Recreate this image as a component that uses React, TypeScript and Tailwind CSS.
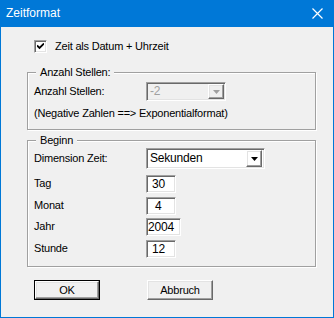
import React from "react";

const font = { fontFamily: '"Liberation Sans", Arial, sans-serif' };

const sunken =
  "border border-t-[#a0a0a0] border-l-[#a0a0a0] border-b-white border-r-white shadow-[inset_1px_1px_0_#696969,inset_-1px_-1px_0_#e3e3e3]";
const raised =
  "border border-t-white border-l-white border-b-[#696969] border-r-[#696969] shadow-[inset_-1px_-1px_0_#a0a0a0,inset_1px_1px_0_#e3e3e3]";

const Arrow = ({ color }: { color: string }) => (
  <svg width="7" height="4" viewBox="0 0 7 4">
    <path d="M0 0h7L3.5 4z" fill={color} />
  </svg>
);

const Group = ({ title, className, children }: { title: string; className: string; children: React.ReactNode }) => (
  <div className={`relative ml-[26px] w-[289px] border border-[#a0a0a0] shadow-[1px_1px_0_#fff,inset_1px_1px_0_#fff] ${className}`}>
    <span className="absolute -top-[8px] left-[8px] bg-[#f0f0f0] px-[4px] leading-[14px]">{title}</span>
    {children}
  </div>
);

const Field = ({ label, value, w, mt, pl }: { label: string; value: string; w: string; mt: string; pl: string }) => (
  <div className={`flex items-center h-[18px] ${mt}`}>
    <span className="w-[112px] -mt-[2px]">{label}</span>
    <div className={`${sunken} ${w} ${pl} h-[18px] bg-white leading-[16px] text-[12px]`}>{value}</div>
  </div>
);

export default function App() {
  return (
    <div className="w-[334px] h-[318px] bg-[#0078d7] px-[1px] pb-[1px] flex flex-col text-[11px] leading-[13px] text-black tracking-[-0.2px]" style={font}>
      <div className="h-[27px] shrink-0 flex items-center justify-between pl-[5px] pr-[10px] text-white text-[12px] tracking-normal">
        <span className="-mt-[1px]">Zeitformat</span>
        <svg width="11" height="11" viewBox="0 0 11 11">
          <path d="M0.5 0.5l10 10M10.5 0.5l-10 10" stroke="#fff" strokeWidth="1.2" />
        </svg>
      </div>
      <div className="flex-1 bg-[#f0f0f0] flex flex-col">
        <div className="mt-[13px] ml-[33px] h-[13px] flex items-center gap-[8px]">
          <div className={`${sunken} w-[13px] h-[13px] bg-white flex items-center justify-center`}>
            <svg width="7" height="7" viewBox="0 0 7 7">
              <path d="M0 2.5l2.5 2.5L7 0.5" stroke="#000" strokeWidth="1.8" fill="none" />
            </svg>
          </div>
          <span>Zeit als Datum + Uhrzeit</span>
        </div>

        <Group title="Anzahl Stellen:" className="mt-[19px] h-[58px] shrink-0">
          <div className="flex items-center pl-[6px] pt-[9px]">
            <span className="w-[112px] -mt-[1px]">Anzahl Stellen:</span>
            <div className={`${sunken} w-[80px] h-[19px] bg-[#f0f0f0] flex items-center justify-between pl-[3px] pr-[1px] text-[#a0a0a0] text-[12px]`}>
              <span>-2</span>
              <div className={`${raised} w-[16px] h-[15px] flex items-center justify-center`}>
                <Arrow color="#a0a0a0" />
              </div>
            </div>
          </div>
          <div className="pl-[6px] pt-[6px]">(Negative Zahlen ==&gt; Exponentialformat)</div>
        </Group>

        <Group title="Beginn" className="mt-[10px] h-[127px] shrink-0">
          <div className="pl-[6px] pt-[7px] flex flex-col">
            <div className="flex items-center h-[21px]">
              <span className="w-[112px]">Dimension Zeit:</span>
              <div className={`${sunken} w-[119px] h-[21px] bg-white flex items-center justify-between pl-[3px] pr-[2px] text-[12px]`}>
                <span>Sekunden</span>
                <div className={`${raised} w-[16px] h-[17px] flex items-center justify-center`}>
                  <Arrow color="#000" />
                </div>
              </div>
            </div>
            <Field label="Tag" value="30" w="w-[30px]" mt="mt-[6px]" pl="pl-[5px]" />
            <Field label="Monat" value="4" w="w-[30px]" mt="mt-[4px]" pl="pl-[8px]" />
            <Field label="Jahr" value="2004" w="w-[35px]" mt="mt-[3px]" pl="pl-[1px]" />
            <Field label="Stunde" value="12" w="w-[30px]" mt="mt-[4px]" pl="pl-[5px]" />
          </div>
        </Group>

        <div className="mt-[13px] ml-[33px] flex gap-[47px]">
          <div className="border border-black">
            <div className={`${raised} w-[64px] h-[18px] flex items-center justify-center`}>OK</div>
          </div>
          <div className={`${raised} w-[66px] h-[20px] flex items-center justify-center`}>Abbruch</div>
        </div>
      </div>
    </div>
  );
}
